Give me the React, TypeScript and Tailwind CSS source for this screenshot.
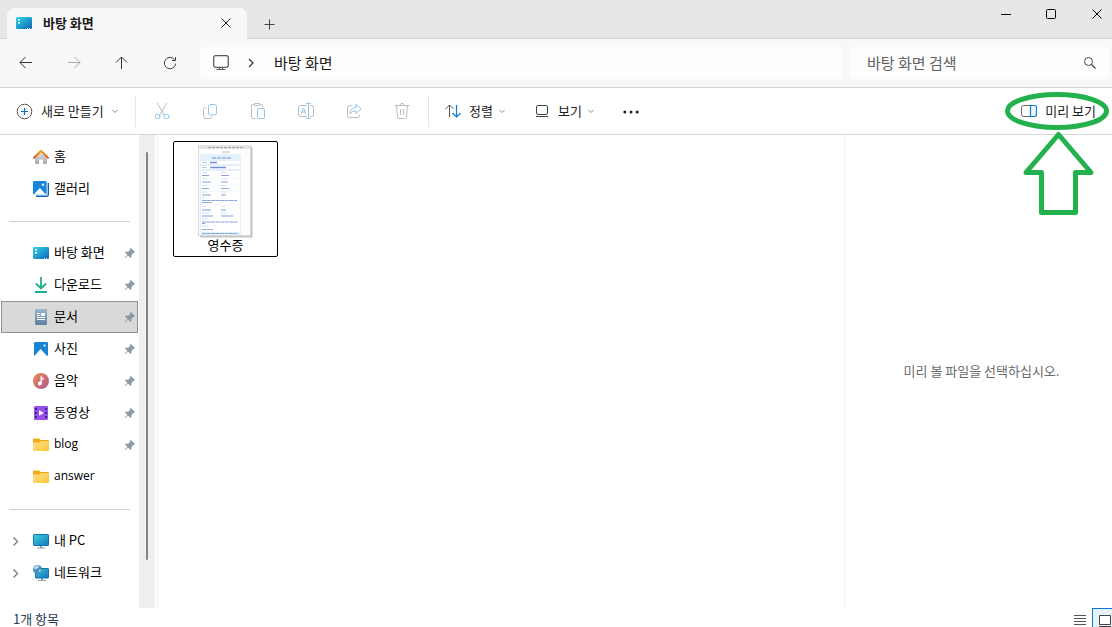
import type { ReactNode } from "react";

function DesktopIcon({ id }: { id: string }) {
  return (
    <svg width="16" height="16" viewBox="0 0 16 16" className="shrink-0">
      <defs>
        <linearGradient id={id} x1="0" y1="0" x2="1" y2="1">
          <stop offset="0" stopColor="#36d3e0" />
          <stop offset="0.5" stopColor="#1f9fd0" />
          <stop offset="1" stopColor="#0b62b0" />
        </linearGradient>
      </defs>
      <rect x="0" y="2" width="16" height="12" rx="1.2" fill={`url(#${id})`} />
      <path d="M2 4h2v1.6H2zM2 7h2v1.6H2z" fill="#fff" />
      <path d="M11 13h1v1h-1zM13 13h1v1h-1z" fill="#d7efff" />
    </svg>
  );
}

function HomeIcon() {
  return (
    <svg width="16" height="16" viewBox="0 0 16 16">
      <defs>
        <linearGradient id="homeWall" x1="0" y1="0" x2="0" y2="1">
          <stop offset="0" stopColor="#e2e2e2" />
          <stop offset="1" stopColor="#a9a9a9" />
        </linearGradient>
        <linearGradient id="homeRoof" x1="0" y1="0" x2="0" y2="1">
          <stop offset="0" stopColor="#f5a623" />
          <stop offset="1" stopColor="#dc5a1c" />
        </linearGradient>
      </defs>
      <path d="M2 8 8 2.5 14 8v6.3a.7.7 0 0 1-.7.7H10v-4.5H6V15H2.7a.7.7 0 0 1-.7-.7z" fill="url(#homeWall)" />
      <path d="M1 8.7 8 1.8l7 6.900" fill="none" stroke="url(#homeRoof)" strokeWidth="2" strokeLinecap="round" strokeLinejoin="round" />
    </svg>
  );
}

function GalleryIcon() {
  return (
    <svg width="16" height="16" viewBox="0 0 16 16">
      <path d="M3 15.300h10.500a1.800 1.800 0 0 0 1.800-1.800V2" fill="none" stroke="#1260b0" strokeWidth="1.400" />
      <rect x="0" y="0" width="13.600" height="13.600" rx="1.300" fill="#1785dc" />
      <path d="M.7 13.600 6.800 7l6.100 6.600z" fill="#fff" />
      <circle cx="10" cy="3.800" r="1.200" fill="#fff" />
    </svg>
  );
}

function DownloadIcon() {
  return (
    <svg width="16" height="16" viewBox="0 0 16 16" fill="none" stroke="#1cae8b" strokeWidth="1.800">
      <path d="M8 0v11M3 6.500l5 5 5-5M2 15h12" />
    </svg>
  );
}

function DocumentIcon() {
  return (
    <svg width="16" height="16" viewBox="0 0 16 16">
      <defs>
        <linearGradient id="docFill" x1="0" y1="0" x2="0" y2="1">
          <stop offset="0" stopColor="#9db7d0" />
          <stop offset="1" stopColor="#5d7f9f" />
        </linearGradient>
      </defs>
      <rect x="2" y="0" width="12" height="16" rx="1.200" fill="url(#docFill)" />
      <path d="M4 4.500h3M4 6.500h3M4 8.500h8M4 10.500h8" stroke="#fff" />
      <rect x="8" y="4" width="4" height="3" fill="#fff" />
    </svg>
  );
}

function PictureIcon() {
  return (
    <svg width="16" height="16" viewBox="0 0 16 16">
      <rect x="1" y="1" width="14" height="14" rx="1.200" fill="#1785d4" />
      <path d="M1.500 15 7.500 8l6.500 7z" fill="#fff" />
      <circle cx="11.500" cy="4.500" r="1.100" fill="#fff" />
    </svg>
  );
}

function MusicIcon() {
  return (
    <svg width="16" height="16" viewBox="0 0 16 16">
      <defs>
        <linearGradient id="musicFill" x1="0" y1="0" x2="1" y2="1">
          <stop offset="0" stopColor="#ec8a50" />
          <stop offset="1" stopColor="#b05a90" />
        </linearGradient>
      </defs>
      <circle cx="8" cy="8" r="8" fill="url(#musicFill)" />
      <path d="M7.500 3.200h1.300c.2 1.200.9 1.800 2 2v1.600c-.8 0-1.400-.2-1.900-.6V10.500a2 2 0 1 1-1.400-1.900z" fill="#fff" />
    </svg>
  );
}

function VideoIcon() {
  return (
    <svg width="16" height="16" viewBox="0 0 16 16">
      <rect x="1" y="1" width="14" height="14" rx="1.200" fill="#9650ea" />
      <path d="M2 3h2v2H2zM2 7h2v2H2zM2 11h2v2H2zM12 3h2v2h-2zM12 7h2v2h-2zM12 11h2v2h-2z" fill="#46208c" />
      <path d="M6 5.200v5.600L10.800 8z" fill="#fff" />
    </svg>
  );
}

function FolderIcon({ id }: { id: string }) {
  return (
    <svg width="16" height="16" viewBox="0 0 16 16">
      <defs>
        <linearGradient id={id} x1="0" y1="0" x2="1" y2="1">
          <stop offset="0" stopColor="#ffe08a" />
          <stop offset="1" stopColor="#fcc437" />
        </linearGradient>
      </defs>
      <path d="M0 2.500a1 1 0 0 1 1-1h5L8 3h7a1 1 0 0 1 1 1V8H0z" fill="#f0ac12" />
      <path d="M0 5.500h6.500L8 4.300h7a1 1 0 0 1 1 1V13a1 1 0 0 1-1 1H1a1 1 0 0 1-1-1z" fill={`url(#${id})`} />
    </svg>
  );
}

function PcIcon() {
  return (
    <svg width="16" height="16" viewBox="0 0 16 16">
      <defs>
        <linearGradient id="pcFill" x1="0" y1="0" x2="1" y2="1">
          <stop offset="0" stopColor="#3ed0dc" />
          <stop offset="1" stopColor="#1478bc" />
        </linearGradient>
      </defs>
      <path d="M7 13h2v2H7zM4 14.500h8v1H4z" fill="#93a1ad" />
      <rect x="0.500" y="1.500" width="15" height="11" rx=".6" fill="url(#pcFill)" stroke="#1471a8" />
    </svg>
  );
}

function NetworkIcon() {
  return (
    <svg width="16" height="16" viewBox="0 0 16 16">
      <defs>
        <linearGradient id="netFill" x1="0" y1="0" x2="1" y2="1">
          <stop offset="0" stopColor="#35c3d8" />
          <stop offset="1" stopColor="#1474bb" />
        </linearGradient>
      </defs>
      <path d="M8 13h2v2H8zM5 15h8v1H5z" fill="#93a1ad" />
      <rect x="2.500" y="3.500" width="13" height="9.500" rx=".6" fill="url(#netFill)" stroke="#1471a8" />
      <circle cx="4.500" cy="4.500" r="4.500" fill="#4a8fba" />
      <path d="M1 2.500C2 1 3.500.5 5 .6 6.500 1 6.500 2.300 5.300 2.800S3.800 4 3 4.300 1 4 1 2.500z" fill="#b5dcf0" />
      <path d="M5.800 4.800c1-.6 1.900-.3 2.300.4C7.800 6.800 6.800 7.600 6 7.200z" fill="#a5d0e8" />
    </svg>
  );
}

function PinIcon() {
  return (
    <svg width="12" height="12" viewBox="0 0 12 12" className="text-[#8e9aa3]">
      <path d="M6.900.9 11 5l-1 1-.7-.1-1.900 2 .1 2.200-1 1L4 8.600.9 11.500l-.5-.4L3.400 8 1 5.500l1-1 2.200.2 2-2L6 1.800z" fill="currentColor" />
    </svg>
  );
}

function Chevron({ className }: { className?: string }) {
  return (
    <svg width="8" height="8" viewBox="0 0 8 8" fill="none" stroke="#8c8c8c" className={className}>
      <path d="M1.500 3 4 5.500 6.500 3" />
    </svg>
  );
}

function Glyph({ children }: { children: ReactNode }) {
  return (
    <svg width="16" height="16" viewBox="0 0 16 16" fill="none" stroke="#bcbcbc" strokeLinecap="round" strokeLinejoin="round">
      {children}
    </svg>
  );
}

const BLUE = "#8fc6ef";

const fileActions: { label: string; icon: ReactNode }[] = [
  {
    label: "잘라내기",
    icon: (
      <Glyph>
        <path d="M3.500.5 10 11.500M12.500.5 6 11.500" />
        <circle cx="3.500" cy="13.500" r="2.400" stroke={BLUE} />
        <circle cx="12.500" cy="13.500" r="2.400" stroke={BLUE} />
      </Glyph>
    ),
  },
  {
    label: "복사",
    icon: (
      <Glyph>
        <path d="M4 4.500H3.500a2 2 0 0 0-2 2v6.500a2.500 2.500 0 0 0 2.500 2.500h4a2 2 0 0 0 2-1.500" />
        <rect x="6.500" y="1.500" width="8" height="10.500" rx="2" stroke={BLUE} />
      </Glyph>
    ),
  },
  {
    label: "붙여넣기",
    icon: (
      <Glyph>
        <path d="M5 15.500H2.500a1 1 0 0 1-1-1v-12a1 1 0 0 1 1-1H4M10 1.500h1.500a1 1 0 0 1 1 1V4" />
        <rect x="4" y=".5" width="6" height="2" rx="1" />
        <rect x="7.500" y="5.500" width="7" height="10" rx="1" stroke={BLUE} />
      </Glyph>
    ),
  },
  {
    label: "이름 바꾸기",
    icon: (
      <Glyph>
        <path d="M8.500 13.500h-6a2 2 0 0 1-2-2v-7a2 2 0 0 1 2-2h6M12.500 2.500h1a2 2 0 0 1 2 2v7a2 2 0 0 1-2 2h-1" />
        <path d="M10.500.5v15M8.500.5h4M8.500 15.500h4M3 11l2.500-6L8 11M4 9h3" stroke={BLUE} />
      </Glyph>
    ),
  },
  {
    label: "공유",
    icon: (
      <Glyph>
        <path d="M6 2.500H3.500a2 2 0 0 0-2 2v8a2 2 0 0 0 2 2h8a2 2 0 0 0 2-2V12" />
        <path d="M10 1.500 15 6l-5 4.500V8C7 7.800 5.500 8.800 4 11c.2-4 2.500-6.500 6-6.800z" stroke={BLUE} />
      </Glyph>
    ),
  },
  {
    label: "삭제",
    icon: (
      <Glyph>
        <path d="M1 2.500h14M6 2.300a2 2 0 0 1 4 0M2.500 2.700l1.100 11.500a1.500 1.500 0 0 0 1.500 1.300h5.800a1.500 1.500 0 0 0 1.500-1.300l1.100-11.500M6.500 6.500v5M9.500 6.500v5" />
      </Glyph>
    ),
  },
];

type Place = { name: string; icon: ReactNode; pinned?: boolean; selected?: boolean; expandable?: boolean };

const groups: Place[][] = [
  [
    { name: "홈", icon: <HomeIcon /> },
    { name: "갤러리", icon: <GalleryIcon /> },
  ],
  [
    { name: "바탕 화면", icon: <DesktopIcon id="deskSide" />, pinned: true },
    { name: "다운로드", icon: <DownloadIcon />, pinned: true },
    { name: "문서", icon: <DocumentIcon />, pinned: true, selected: true },
    { name: "사진", icon: <PictureIcon />, pinned: true },
    { name: "음악", icon: <MusicIcon />, pinned: true },
    { name: "동영상", icon: <VideoIcon />, pinned: true },
    { name: "blog", icon: <FolderIcon id="folderA" />, pinned: true },
    { name: "answer", icon: <FolderIcon id="folderB" /> },
  ],
  [
    { name: "내 PC", icon: <PcIcon />, expandable: true },
    { name: "네트워크", icon: <NetworkIcon />, expandable: true },
  ],
];

function PlaceRow({ place }: { place: Place }) {
  const latin = /^[a-z]+$/.test(place.name);
  return (
    <li>
      <a
        href="#"
        className={
          place.selected
            ? "mx-px flex h-8 items-center border border-[#919191] bg-[#d9d9d9] pl-2 pr-px"
            : "mx-px flex h-8 items-center border border-transparent pl-2 pr-px"
        }
      >
        <span className="mr-3 w-[11px]">
          {place.expandable && (
            <svg width="11" height="11" viewBox="0 0 11 11" fill="none" stroke="#858585" strokeWidth="1.500">
              <path d="M3.500 1.500 7.500 5.500 3.500 9.500" />
            </svg>
          )}
        </span>
        {place.icon}
        <span
          className={
            latin
              ? "ml-[5px] flex-1 whitespace-nowrap pb-0.5 font-['Open_Sans',sans-serif] text-xs text-black"
              : "ml-[5px] flex-1 whitespace-nowrap pb-0.5 text-black"
          }
        >
          {place.name}
        </span>
        {place.pinned && <PinIcon />}
      </a>
    </li>
  );
}

const receiptLines: { y: number; left: number; right: number }[] = [
  { y: 30.5, left: 7, right: 8 },
  { y: 37, left: 9, right: 7 },
  { y: 43.5, left: 7, right: 8 },
  { y: 50, left: 9, right: 5 },
];

function ReceiptThumbnail() {
  return (
    <svg width="55" height="94" viewBox="0 0 55 94" role="img" aria-label="영수증">
      <path d="M2 91.500h51.500V2" fill="none" stroke="#c4c4c4" strokeWidth="2" />
      <rect x=".5" y=".5" width="52" height="90" fill="#fdfdfd" stroke="#d9d9d9" />
      <rect x="1" y="0" width="51" height="4" fill="#e4e4e4" />
      <path d="M10 2.500h35" stroke="#a3a3a3" strokeDasharray="3 1" />
      <path d="M24 7h8" stroke="#c0c0c0" />
      <rect x="2" y="9" width="41" height="81" fill="#e4f1fc" />
      <path d="M14 13h19" stroke="#93b1e2" strokeWidth="1.500" strokeDasharray="4 1" />
      <path d="M3 16h39v3H3zM3 21h39v3H3zM3 26h39v61H3z" fill="#fff" />
      <path d="M4 17.500h5M4 22.500h5" stroke="#b5d3ee" />
      <path d="M12 17.500h7M12 22.500h16" stroke="#6f8cd6" strokeWidth="1.300" />
      {receiptLines.map(({ y, left, right }) => (
        <g key={y}>
          <path d={`M4 ${y - 3}h5M23 ${y - 3}h5`} stroke="#cfe2f4" />
          <path d={`M4 ${y}h${left}M23 ${y}h${right}`} stroke="#8ca3de" strokeWidth="1.200" />
        </g>
      ))}
      <path d="M4 55.500h35M4 57.500h10M4 77h36M4 78.500h3M4 84.500h11M4 88.500h36" stroke="#8aa4de" strokeDasharray="4 .5" />
      <path d="M4 65h9M23 65h5M4 71h11M23 71h12" stroke="#829bdb" strokeWidth="1.200" />
      <path d="M4 53h3M4 61.500h4M23 61.500h4M4 68h8M23 68h6M4 74h6M4 81h6" stroke="#cfe2f4" />
      <path d="M3 33.500h39M3 40h39M3 46.500h39M3 59.500h39" stroke="#e6f0fb" strokeWidth=".5" />
    </svg>
  );
}

export default function App() {
  return (
    <div className="relative flex min-h-screen flex-col overflow-hidden bg-white font-['Noto_Sans_CJK_KR',sans-serif] text-[13px] leading-5 text-[#1b1b1b]">
      <header>
        <div className="flex items-start border-b border-[#d6d6d6] bg-[#e7e7e7]">
          <div className="-mb-px ml-[7px] mt-2 flex h-[31px] w-60 items-center rounded-t-lg bg-[#f8f8f8] pb-px pl-[9px] pr-[11px]">
            <DesktopIcon id="deskTab" />
            <span className="ml-[11px] flex-1 pb-px font-bold">바탕 화면</span>
            <button type="button" aria-label="탭 닫기" className="flex h-5 w-5 items-center justify-center">
              <svg width="10" height="10" viewBox="0 0 10 10" fill="none" stroke="#222"><path d="M.5.5l9 9M9.500.5l-9 9" /></svg>
            </button>
          </div>
          <button type="button" aria-label="새 탭" className="ml-3 mt-3.5 flex h-5 w-5 items-center justify-center">
            <svg width="11" height="11" viewBox="0 0 11 11" fill="none" stroke="#444"><path d="M5.500 .5v10M.5 5.500h10" /></svg>
          </button>
          <div className="ml-auto flex h-[29px]">
            <button type="button" aria-label="최소화" className="flex w-[45px] items-center justify-center">
              <svg width="11" height="11" viewBox="0 0 11 11" fill="none" stroke="#000"><path d="M0 5.500h10" /></svg>
            </button>
            <button type="button" aria-label="최대화" className="flex w-[45px] items-center justify-center">
              <svg width="11" height="11" viewBox="0 0 11 11" fill="none" stroke="#000"><rect x=".5" y=".5" width="9" height="9" rx="1" /></svg>
            </button>
            <button type="button" aria-label="닫기" className="flex w-[38px] items-center pl-[18px]">
              <svg width="11" height="11" viewBox="0 0 11 11" fill="none" stroke="#000"><path d="M.5.5l9 9M9.500.5l-9 9" /></svg>
            </button>
          </div>
        </div>

        <nav className="flex h-[49px] items-center border-b border-[#d6d6d6] bg-[#f8f8f8] pl-0.5 pr-[3px]">
          <button type="button" aria-label="뒤로" className="flex h-8 w-12 items-center justify-center">
            <svg width="14" height="14" viewBox="0 0 14 14" fill="none" stroke="#333"><path d="M13 6.500H1M6.500 1 1 6.500 6.500 12" /></svg>
          </button>
          <button type="button" aria-label="앞으로" disabled className="flex h-8 w-12 items-center justify-center">
            <svg width="14" height="14" viewBox="0 0 14 14" fill="none" stroke="#aaa"><path d="M1 6.500h12M7.500 1 13 6.500 7.500 12" /></svg>
          </button>
          <button type="button" aria-label="위로" className="flex h-8 w-12 items-center justify-center">
            <svg width="14" height="14" viewBox="0 0 14 14" fill="none" stroke="#333"><path d="M6.500 13V1M1 6.500 6.500 1 12 6.500" /></svg>
          </button>
          <button type="button" aria-label="새로 고침" className="flex h-8 w-12 items-center justify-center">
            <svg width="14" height="14" viewBox="0 0 14 14" fill="none" stroke="#444"><path d="M11.800 4A5.700 5.700 0 1 0 12.700 7.500M12.500 1v3.500H9" /></svg>
          </button>
          <div className="ml-1.5 flex h-8 flex-1 items-center rounded bg-[#fdfdfd] pl-[13px] text-[15px]">
            <svg width="16" height="16" viewBox="0 0 16 16" fill="none" stroke="#5c5c5c">
              <rect x=".7" y=".7" width="14.600" height="11.600" rx="2" strokeWidth="1.300" />
              <path d="M6.500 12.500v2M9.500 12.500v2M3.500 14.500h9" strokeWidth="1.200" />
            </svg>
            <svg width="8" height="10" viewBox="0 0 8 10" fill="none" stroke="#333" strokeWidth="1.200" className="ml-[18px]"><path d="M2 1l4 4-4 4" /></svg>
            <a href="#" className="ml-[19px]">바탕 화면</a>
          </div>
          <label className="ml-2 flex h-8 w-[259px] items-center rounded bg-[#fdfdfd] pl-[17px] pr-[13px]">
            <input type="text" aria-label="바탕 화면 검색" placeholder="바탕 화면 검색" className="min-w-0 flex-1 bg-transparent text-[15px] outline-none placeholder:text-[#616161]" />
            <svg width="12" height="12" viewBox="0 0 12 12" fill="none" stroke="#444"><circle cx="4.500" cy="4.500" r="4" /><path d="M7.500 7.500l4 4" strokeWidth="1.200" /></svg>
          </label>
        </nav>

        <div className="flex h-[47px] items-center border-b border-[#d6d6d6] bg-white" role="toolbar">
          <button type="button" className="flex h-8 w-[135px] items-center pl-4">
            <svg width="17" height="17" viewBox="0 0 17 17" fill="none">
              <circle cx="8.500" cy="8.500" r="7.300" stroke="#555" />
              <path d="M8.500 5v7M5 8.500h7" stroke="#0a6fc9" strokeWidth="1.200" />
            </svg>
            <span className="ml-2">새로 만들기</span>
            <Chevron className="ml-[7px]" />
          </button>
          <div className="flex h-8 border-x border-[#e8e8e8] px-0.5">
            {fileActions.map((action) => (
              <button key={action.label} type="button" disabled aria-label={action.label} className="flex w-12 items-center justify-center">
                {action.icon}
              </button>
            ))}
          </div>
          <button type="button" className="flex h-8 items-center pl-4 pr-3">
            <svg width="16" height="16" viewBox="0 0 16 16" fill="none">
              <path d="M4.500 14V2M.5 6 4.500 2l4 4" stroke="#555" />
              <path d="M11.500 2v12M7.500 10l4 4 4-4" stroke="#0a78d4" strokeWidth="1.200" />
            </svg>
            <span className="ml-2">정렬</span>
            <Chevron className="ml-[5px]" />
          </button>
          <button type="button" className="flex h-8 items-center pl-4 pr-3">
            <svg width="16" height="16" viewBox="0 0 16 16" fill="none" stroke="#444">
              <rect x="2.500" y="2.500" width="11" height="9" rx="1.500" />
              <path d="M2 13.500h12" />
            </svg>
            <span className="ml-2">보기</span>
            <Chevron className="ml-[5px]" />
          </button>
          <button type="button" aria-label="자세히" className="flex h-8 items-center pl-4 pr-3">
            <svg width="16" height="16" viewBox="0 0 16 16" fill="#222"><circle cx="1.800" cy="9" r="1.500" /><circle cx="8" cy="9" r="1.500" /><circle cx="14.200" cy="9" r="1.500" /></svg>
          </button>
          <button type="button" className="ml-auto flex h-8 items-center pr-4">
            <svg width="16" height="16" viewBox="0 0 16 16" fill="none">
              <path d="M9.500 2.500h-7a2 2 0 0 0-2 2v7a2 2 0 0 0 2 2h7" stroke="#666" />
              <path d="M9.500 2.500h4a2 2 0 0 1 2 2v7a2 2 0 0 1-2 2h-4z" stroke="#0a78d4" strokeWidth="1.200" fill="#f0f8fe" />
            </svg>
            <span className="ml-2">미리 보기</span>
          </button>
        </div>
      </header>

      <div className="flex flex-1">
        <aside className="w-[139px] pt-1.5">
          {groups.map((group, i) => (
            <div key={i}>
              {i > 0 && <hr className="mx-[9px] mb-[15px] mt-4 border-[#d0d0d0]" />}
              <ul>
                {group.map((place) => (
                  <PlaceRow key={place.name} place={place} />
                ))}
              </ul>
            </div>
          ))}
        </aside>
        <div className="flex w-4 justify-center bg-[#efefef] pb-12 pt-[17px]">
          <div className="w-0.5 rounded bg-[#858585]" />
        </div>
        <main className="ml-0.5 flex-1 border-x border-[#f3f3f3] pl-[15px] pt-1.5">
          <button type="button" className="flex h-[116px] w-[105px] flex-col items-center rounded-xs border border-black pt-[3px]">
            <ReceiptThumbnail />
            <span className="-mt-1 text-black">영수증</span>
          </button>
        </main>
        <section className="flex w-[267px] items-center justify-center pb-0.5 pl-1.5 text-[#6a6a6a]">
          <p>미리 볼 파일을 선택하십시오.</p>
        </section>
      </div>

      <footer className="flex h-[19px] items-center justify-between pl-[13px] text-[#273b55]">
        <span className="pt-0.5">1개 항목</span>
        <div className="flex h-full">
          <button type="button" aria-label="자세히 보기" className="flex w-6 items-center justify-center pt-[5px]">
            <svg width="12" height="12" viewBox="0 0 12 12" stroke="#555"><path d="M0 1.500h12M0 4.500h12M0 7.500h12M0 10.500h12" /></svg>
          </button>
          <button type="button" aria-label="큰 아이콘" className="flex w-5 items-end justify-end border-l border-t border-[#0a78d4] bg-[#e5f3fb] pr-px">
            <svg width="12" height="12" viewBox="0 0 12 12" stroke="#444"><path d="M.5.5h11v9H.5z" fill="#fff" /><path d="M0 11.500h12" /></svg>
          </button>
        </div>
      </footer>

      <svg width="112" height="130" viewBox="0 0 112 130" fill="none" stroke="#22b14c" strokeWidth="5" strokeLinejoin="round" className="pointer-events-none absolute right-0 top-[88px]">
        <ellipse cx="57" cy="23" rx="49.500" ry="16.500" />
        <path d="M58.500 46.500 91 84.500H75.500V124.500H41.500V84.500H26z" />
      </svg>
    </div>
  );
}
